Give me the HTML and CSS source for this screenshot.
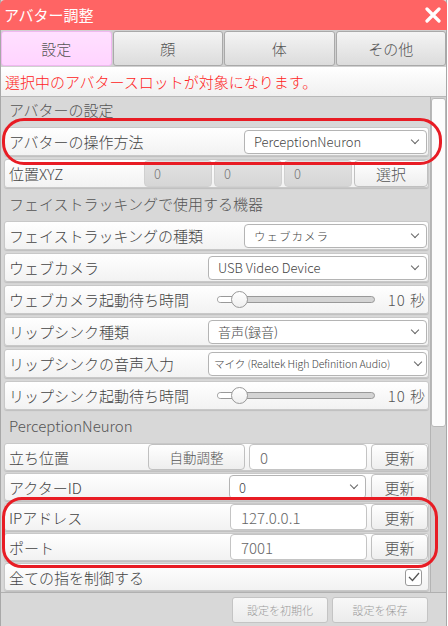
FILE: index.html
```html
<!DOCTYPE html>
<html lang="ja">
<head>
<meta charset="utf-8">
<link rel="stylesheet" href="styles.css">
</head>
<body>
<div class="window">
  <div class="titlebar">
    <span class="title">アバター調整</span>
    <svg class="close" width="16" height="16" viewBox="0 0 16 16"><path d="M2 2 L14 14 M14 2 L2 14" stroke="#fff" stroke-width="3.2" stroke-linecap="round"/></svg>
  </div>
  <div class="tabs">
    <div class="tab active">設定</div>
    <div class="tab">顔</div>
    <div class="tab">体</div>
    <div class="tab">その他</div>
  </div>
  <div class="notice">選択中のアバタースロットが対象になります。</div>
  <div class="content">
    <div class="panel">
      <div class="section">アバターの設定</div>
      <div class="row">
        <span class="label">アバターの操作方法</span>
        <div class="select w183"><span>PerceptionNeuron</span><i class="chev"></i></div>
      </div>
      <div class="row xyz">
        <span class="label fixed">位置XYZ</span>
        <div class="input dis">0</div>
        <div class="input dis">0</div>
        <div class="input dis">0</div>
        <div class="btn w74">選択</div>
      </div>
      <div class="section">フェイストラッキングで使用する機器</div>
      <div class="row">
        <span class="label">フェイストラッキングの種類</span>
        <div class="select w183 small"><span>ウェブカメラ</span><i class="chev"></i></div>
      </div>
      <div class="row">
        <span class="label">ウェブカメラ</span>
        <div class="select w219"><span>USB Video Device</span><i class="chev"></i></div>
      </div>
      <div class="row">
        <span class="label">ウェブカメラ起動待ち時間</span>
        <div class="slider"><div class="fill"></div><div class="knob"></div></div>
        <span class="val">10 秒</span>
      </div>
      <div class="row">
        <span class="label">リップシンク種類</span>
        <div class="select w219"><span>音声(録音)</span><i class="chev"></i></div>
      </div>
      <div class="row">
        <span class="label">リップシンクの音声入力</span>
        <div class="select w219 tiny"><span>マイク (Realtek High Definition Audio)</span><i class="chev"></i></div>
      </div>
      <div class="row">
        <span class="label">リップシンク起動待ち時間</span>
        <div class="slider"><div class="fill"></div><div class="knob"></div></div>
        <span class="val">10 秒</span>
      </div>
      <div class="section">PerceptionNeuron</div>
      <div class="row tight">
        <span class="label">立ち位置</span>
        <div class="btn w97 sm">自動調整</div>
        <div class="input w118 big">0</div>
        <div class="btn w57">更新</div>
      </div>
      <div class="row tight">
        <span class="label">アクターID</span>
        <div class="select w137"><span>0</span><i class="chev"></i></div>
        <div class="btn w57">更新</div>
      </div>
      <div class="row tight">
        <span class="label">IPアドレス</span>
        <div class="input w137 big">127.0.0.1</div>
        <div class="btn w57">更新</div>
      </div>
      <div class="row tight">
        <span class="label">ポート</span>
        <div class="input w137 big">7001</div>
        <div class="btn w57">更新</div>
      </div>
      <div class="row tight">
        <span class="label">全ての指を制御する</span>
        <div class="check"><svg width="12" height="10" viewBox="0 0 12 10"><path d="M1 5 L4.5 8.5 L11 1" fill="none" stroke="#555" stroke-width="1.3"/></svg></div>
      </div>
    </div>
    <div class="scrollbar"><div class="thumb"></div></div>
  </div>
  <div class="footer">
    <div class="fbtn">設定を初期化</div>
    <div class="fbtn">設定を保存</div>
  </div>
  <div class="mark mark1"></div>
  <div class="mark mark2"></div>
</div>
</body>
</html>
```
FILE: styles.css
```css
* { box-sizing: border-box; }
html, body { margin: 0; padding: 0; background: #fff; }
body { font-family: "Noto Sans CJK JP", "Noto Sans", sans-serif; font-weight: 300; color: #4a4a4a; }
.window { position: relative; width: 447px; height: 626px; background: #d8d8d8; border-left: 1px solid #a8a8a8; border-right: 1px solid #a8a8a8; display: flex; flex-direction: column; }
.titlebar { flex: none; height: 30px; background: #ff6464; border-radius: 5px 5px 0 0; display: flex; align-items: center; justify-content: space-between; padding: 0 6px 0 4px; margin: 0 -1px; }
.title { color: #fff; font-size: 15px; line-height: 30px; font-weight: 400; }
.close { display: block; }
.tabs { flex: none; display: grid; grid-template-columns: repeat(4, 1fr); gap: 1px; padding: 1px 0 1px; background: #d0d0d0; }
.tab { height: 35px; display: flex; align-items: center; justify-content: center; font-size: 15px; color: #555; background: linear-gradient(#f4f4f4, #dcdcdc); border: 1px solid #a9a9a9; border-radius: 3px; }
.tab.active { background: linear-gradient(#ffe0ff, #ffd4ff); border-color: #f0b8f0; }
.notice { flex: none; height: 30px; background: linear-gradient(#ffffff, #f0f0f0); color: #ff2222; font-size: 15px; line-height: 29px; padding-left: 4px; border-bottom: 1px solid #b8b8b8; }
.content { flex: 1; display: flex; min-height: 0; border-bottom: 1px solid #b0b0b0; }
.panel { flex: none; width: 428px; padding: 0 0 0 3px; overflow: hidden; }
.section { height: 30px; line-height: 26px; font-size: 15px; color: #555; padding-left: 5px; }
.row { height: 29px; margin-bottom: 3px; display: flex; align-items: center; background: linear-gradient(#ffffff, #f2f2f2); border: 1px solid #c8c8c8; border-radius: 3px; box-shadow: 0 1px 1px rgba(0,0,0,0.12); gap: 3px; }
.row.tight { height: 28px; margin-bottom: 2px; gap: 4px; }
.row.xyz { gap: 2px; }
.row > * { flex: none; }
.row > .label { flex: 1 1 auto; }
.label { font-size: 15px; color: #444; padding-left: 4px; white-space: nowrap; min-width: 0; }
.row > .label.fixed { flex: 0 0 137px; }
.select { height: 24px; border: 1px solid #b4b4b4; border-radius: 4px; background: #fff; display: flex; align-items: center; justify-content: space-between; padding: 0 8px 0 9px; font-size: 13px; color: #444; margin-right: 1px; }
.select.small span { font-size: 11.5px; letter-spacing: 1px; }
.select.tiny { padding-left: 5px; padding-right: 5px; }
.select.tiny span { font-size: 10.6px; letter-spacing: -0.1px; }
.chev { width: 6px; height: 6px; border-right: 1.2px solid #666; border-bottom: 1.2px solid #666; transform: rotate(45deg); margin-top: -4px; }
.input { height: 27px; width: 68px; border: 1px solid #c4c4c4; border-radius: 4px; background: #fff; font-size: 13px; color: #777; padding-left: 9px; display: flex; align-items: center; }
.row.tight .input, .row.tight .btn { height: 26px; }
.input.dis { background: linear-gradient(#e2e2e2, #d6d6d6); border-color: #d0d0d0; }
.input.big { font-size: 15px; padding-left: 10px; color: #666; }
.btn { height: 27px; display: flex; align-items: center; justify-content: center; font-size: 15px; color: #555; background: linear-gradient(#ffffff, #eeeeee); border: 1px solid #c0c0c0; border-radius: 4px; }
.btn.sm { font-size: 13.5px; }
.w183 { width: 183px; }
.w219 { width: 219px; }
.w137 { width: 137px; }
.w74 { width: 74px; }
.w97 { width: 97px; }
.w118 { width: 118px; }
.w57 { width: 57px; }
.slider { position: relative; width: 158px; height: 7px; border: 1px solid #999; border-radius: 4px; background: #d4d4d4; margin-right: 10px; margin-left: auto; }
.slider .fill { width: 20px; height: 100%; background: #fff; border-radius: 4px 0 0 4px; }
.slider .knob { position: absolute; left: 13px; top: -6px; width: 17px; height: 17px; border-radius: 50%; border: 1px solid #999; background: linear-gradient(#ffffff, #efefef); }
.val { font-size: 15px; color: #555; padding-right: 2px; letter-spacing: 1px; }
.check { width: 17px; height: 17px; border: 1px solid #999; border-radius: 3px; background: #fff; display: flex; align-items: center; justify-content: center; margin-right: 6px; }
.scrollbar { flex: none; width: 16px; background: #d0d0d0; border-left: 1px solid #b4b4b4; margin-left: 1px; padding-top: 1px; }
.thumb { height: 329px; background: #fcfcfc; border: 1px solid #b8b8b8; border-radius: 3px; }
.footer { flex: none; height: 33px; display: flex; justify-content: flex-end; align-items: center; gap: 4px; padding-right: 18px; padding-top: 1px; }
.fbtn { width: 96px; height: 26px; border: 1px solid #c4c4c4; border-radius: 3px; background: linear-gradient(#f8f8f8, #ececec); font-size: 11px; color: #9a9a9a; display: flex; align-items: center; justify-content: center; }
.mark { position: absolute; border: 3.5px solid #e81c24; border-radius: 22px; pointer-events: none; }
.mark1 { left: 1px; top: 118px; width: 440px; height: 47px; }
.mark2 { left: 1px; top: 497px; width: 436px; height: 71px; border-radius: 20px; }
```
